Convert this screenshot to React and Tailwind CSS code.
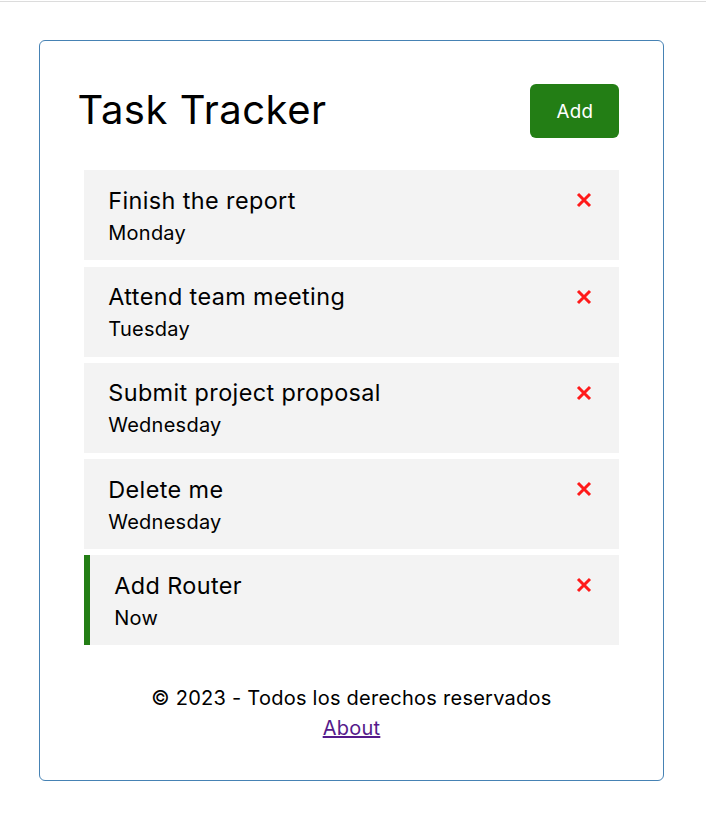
const tasks = [
  { id: 1, text: "Finish the report", day: "Monday", reminder: false },
  { id: 2, text: "Attend team meeting", day: "Tuesday", reminder: false },
  { id: 3, text: "Submit project proposal", day: "Wednesday", reminder: false },
  { id: 4, text: "Delete me", day: "Wednesday", reminder: false },
  { id: 5, text: "Add Router", day: "Now", reminder: true },
];

function Times() {
  return (
    <svg width="16" height="16" viewBox="0 0 16 16" className="mr-[2px]">
      <path d="M2 2L14 14M14 2L2 14" stroke="#ff1a1a" strokeWidth="3" />
    </svg>
  );
}

function Task({ task }) {
  return (
    <div
      className={
        "bg-[#f3f3f3] pl-[24.5px] pr-[25px] py-[12.5px] h-[90px] cursor-pointer " +
        (task.reminder ? "border-l-[6px] border-[#237e15]" : "")
      }
    >
      <h3 className="flex items-center justify-between text-[23.4px] leading-[35px] font-normal tracking-[0.4px]">
        {task.text}
        <Times />
      </h3>
      <p className="text-[20px] leading-[30px] tracking-[0.25px]">{task.day}</p>
    </div>
  );
}

export default function App() {
  return (
    <div className="min-h-screen bg-white text-black font-['Inter',sans-serif]">
      <div className="mt-px h-px bg-[#dcdcdc]" />
      <div className="ml-[39px] mt-[38px] w-[625px] border border-[#4682b4] rounded-[6px] p-[37.5px]">
        {/* Header */}
        <header className="flex items-center justify-between mb-[26px]">
          <h1 className="text-[40px] leading-[60px] font-normal tracking-[0.5px] -mt-[2px]">Task Tracker</h1>
          <button className="m-[6.25px] mt-[5.5px] px-[26px] py-[12.5px] text-[18.75px] leading-[29px] tracking-[0.3px] text-white bg-[#237e15] rounded-[6px]">
            Add
          </button>
        </header>

        {/* Tasks */}
        <div className="flex flex-col gap-[6.25px] px-[6.25px]">
          {tasks.map((task) => (
            <Task key={task.id} task={task} />
          ))}
        </div>

        {/* Footer */}
        <footer className="mt-[37.5px] text-center text-[20px] leading-[30px] tracking-[0.25px]">
          <p>&copy; 2023 - Todos los derechos reservados</p>
          <a href="#about" className="underline text-[#551a8b]">
            About
          </a>
        </footer>
      </div>
    </div>
  );
}
